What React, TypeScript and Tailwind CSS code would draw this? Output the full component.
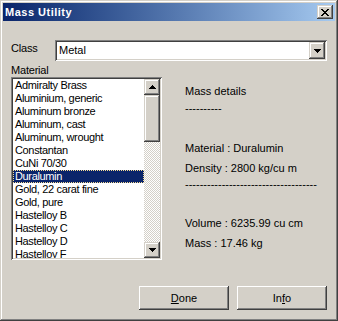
import React from "react";

const raised =
  "shadow-[inset_-1px_-1px_#404040,inset_1px_1px_#ffffff,inset_-2px_-2px_#808080,inset_2px_2px_#d4d0c8]";
const raisedLight =
  "shadow-[inset_-1px_-1px_#404040,inset_1px_1px_#d4d0c8,inset_-2px_-2px_#808080,inset_2px_2px_#ffffff]";
const sunken =
  "shadow-[inset_1px_1px_#808080,inset_-1px_-1px_#ffffff,inset_2px_2px_#404040,inset_-2px_-2px_#d4d0c8]";

const materials = [
  "Admiralty Brass",
  "Aluminium, generic",
  "Aluminum bronze",
  "Aluminum, cast",
  "Aluminum, wrought",
  "Constantan",
  "CuNi 70/30",
  "Duralumin",
  "Gold, 22 carat fine",
  "Gold, pure",
  "Hastelloy B",
  "Hastelloy C",
  "Hastelloy D",
  "Hastelloy F",
];

function Arrow({ up = false }: { up?: boolean }) {
  return (
    <svg width="7" height="4" viewBox="0 0 7 4" shapeRendering="crispEdges" className={up ? "rotate-180" : ""}>
      <path d="M0 0h7v1H0z M1 1h5v1H1z M2 2h3v1H2z M3 3h1v1H3z" fill="#000" />
    </svg>
  );
}

function CloseGlyph() {
  return (
    <svg width="8" height="7" viewBox="0 0 8 7" shapeRendering="crispEdges">
      <path
        d="M0 0h2v1H0z M6 0h2v1H6z M1 1h2v1H1z M5 1h2v1H5z M2 2h4v1H2z M3 3h2v1H3z M2 4h4v1H2z M1 5h2v1H1z M5 5h2v1H5z M0 6h2v1H0z M6 6h2v1H6z"
        fill="#000"
      />
    </svg>
  );
}

export default function App() {
  return (
    <div
      className={`w-[338px] h-[321px] bg-[#d4d0c8] p-[3px] text-[11px] text-black shadow-[inset_-1px_-1px_#404040,inset_1px_1px_#d4d0c8,inset_-2px_-2px_#808080,inset_2px_2px_#ffffff] font-['Liberation_Sans',Arial,sans-serif]`}
    >
      {/* title bar */}
      <div className="h-[18px] flex items-center justify-between pl-[2px] pr-[2px] bg-linear-to-r from-[#0a246a] to-[#a6caf0]">
        <span className="text-white font-bold text-[11px] tracking-[0.5px] leading-none">Mass Utility</span>
        <button className={`w-[16px] h-[14px] bg-[#d4d0c8] flex items-center justify-center ${raisedLight}`}>
          <CloseGlyph />
        </button>
      </div>

      <div className="pl-[8px] pr-[8px]">
        {/* class row */}
        <div className="flex mt-[19px]">
          <div className="w-[44px] leading-[13px] mt-[2px] tracking-[-0.2px]">Class</div>
          <div className={`w-[272px] h-[21px] bg-white flex items-center p-[2px] ${sunken}`}>
            <span className="flex-1 pl-[2px] leading-[13px]">Metal</span>
            <div className={`w-[16px] h-[17px] bg-[#d4d0c8] flex items-center justify-center ${raisedLight}`}>
              <Arrow />
            </div>
          </div>
        </div>

        {/* material list + details */}
        <div className="flex mt-[3px]">
          <div className="flex flex-col">
            <div className="leading-[13px] tracking-[-0.2px]">Material</div>
            <div className={`w-[151px] h-[183px] bg-white p-[2px] flex ${sunken}`}>
              <div className="flex-1 overflow-hidden tracking-[-0.35px]">
                {materials.map((m) => (
                  <div
                    key={m}
                    className={
                      m === "Duralumin"
                        ? "h-[13px] leading-[11px] pl-[1px] bg-[#0a246a] text-white border border-dotted border-[#f5db95] whitespace-nowrap"
                        : "h-[13px] leading-[13px] pl-[2px] whitespace-nowrap"
                    }
                  >
                    {m}
                  </div>
                ))}
              </div>
              <div className="w-[16px] flex flex-col bg-[repeating-conic-gradient(#d4d0c8_0_25%,#ffffff_0_50%)] bg-[length:2px_2px]">
                <div className={`h-[16px] bg-[#d4d0c8] flex items-center justify-center ${raisedLight}`}>
                  <Arrow up />
                </div>
                <div className={`h-[47px] bg-[#d4d0c8] ${raisedLight}`} />
                <div className="flex-1" />
                <div className={`h-[16px] bg-[#d4d0c8] flex items-center justify-center ${raisedLight}`}>
                  <Arrow />
                </div>
              </div>
            </div>
          </div>

          <div className="ml-[23px] flex flex-col leading-[13px] whitespace-nowrap">
            <div className="mt-[21px]">Mass details</div>
            <div className="mt-[4px]">----------</div>
            <div className="mt-[27px]">Material : Duralumin</div>
            <div className="mt-[7px]">Density : 2800 kg/cu m</div>
            <div className="mt-[3px]">------------------------------------</div>
            <div className="mt-[26px]">Volume : 6235.99 cu cm</div>
            <div className="mt-[7px]">Mass : 17.46 kg</div>
          </div>
        </div>

        {/* buttons */}
        <div className="flex justify-end gap-[8px] mt-[26px]">
          <button className={`w-[90px] h-[24px] bg-[#d4d0c8] leading-[13px] ${raised}`}>
            <span className="underline underline-offset-[1px]">D</span>one
          </button>
          <button className={`w-[90px] h-[24px] bg-[#d4d0c8] leading-[13px] ${raised}`}>
            In<span className="underline underline-offset-[1px]">f</span>o
          </button>
        </div>
      </div>
    </div>
  );
}
